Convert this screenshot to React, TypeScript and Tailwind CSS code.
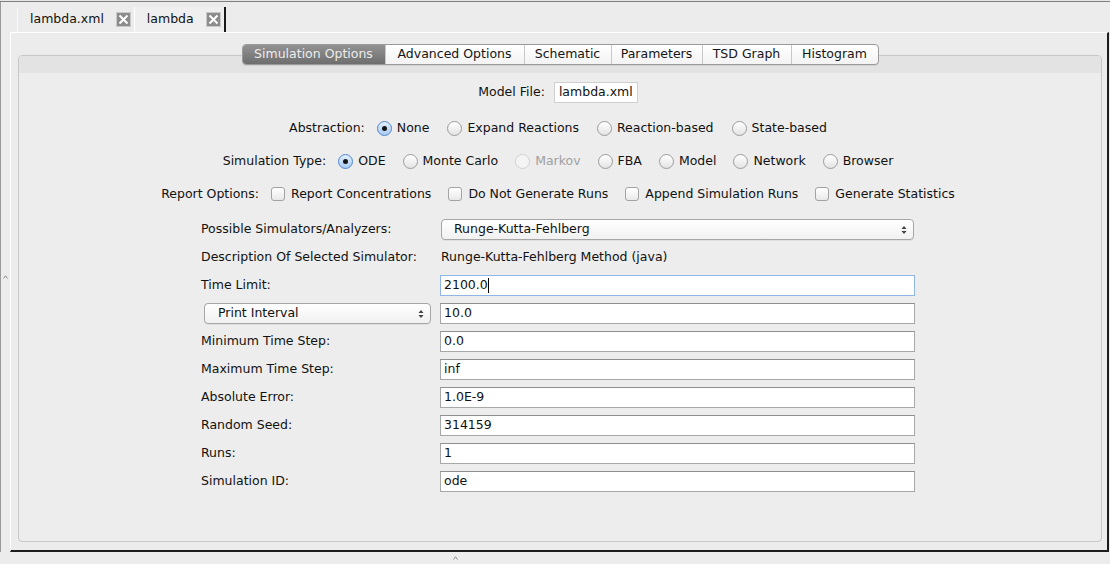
import React from "react";

const CloseBox = () => (
  <svg width="15" height="15" viewBox="0 0 15 15" className="block">
    <rect x="0.5" y="0.5" width="14" height="14" fill="#8c8c8c" stroke="#c9c9c9" />
    <path d="M3.5 3.5 L11.5 11.5 M11.5 3.5 L3.5 11.5" stroke="#ffffff" strokeWidth="2" />
  </svg>
);

const Caret = () => (
  <svg width="5" height="4" viewBox="0 0 5 4" className="block">
    <path d="M0.5 3.5 L2.5 0.8 L4.5 3.5" fill="none" stroke="#8a8a8a" strokeWidth="1" />
  </svg>
);

const UpDown = () => (
  <svg width="6" height="10" viewBox="0 0 6 10" className="block">
    <path d="M3 1 L5.5 4 L0.5 4 Z M3 9 L5.5 6 L0.5 6 Z" fill="#404040" />
  </svg>
);

function Radio({ checked, disabled }: { checked?: boolean; disabled?: boolean }) {
  const cls = checked
    ? "border-[#4f86cc] bg-[linear-gradient(#e3efff,#a9cbf3)]"
    : disabled
    ? "border-[#d2d2d2] bg-[#f4f4f4]"
    : "border-[#9c9c9c] bg-[linear-gradient(#ffffff,#e4e4e4)]";
  return (
    <span className={`w-[15px] h-[15px] rounded-full border flex items-center justify-center shrink-0 ${cls}`}>
      {checked && <span className="w-[5px] h-[5px] rounded-full bg-[#151515]" />}
    </span>
  );
}

function RadioOpt({ label, checked, disabled }: { label: string; checked?: boolean; disabled?: boolean }) {
  return (
    <span className="flex items-center gap-[5px]">
      <Radio checked={checked} disabled={disabled} />
      <span className={disabled ? "text-[#a0a0a0]" : ""}>{label}</span>
    </span>
  );
}

function Check({ label }: { label: string }) {
  return (
    <span className="flex items-center gap-[6px]">
      <span className="w-[14px] h-[14px] rounded-[3px] border border-[#a3a3a3] bg-[linear-gradient(#ffffff,#e9e9e9)] shrink-0" />
      <span>{label}</span>
    </span>
  );
}

function Input({ value, focused, cursor }: { value: string; focused?: boolean; cursor?: boolean }) {
  return (
    <div
      className={`h-[21px] bg-white border pl-[3px] flex items-center ${
        focused ? "border-[#8fb6e4]" : "border-[#a8a8a8] border-t-[#8f8f8f]"
      }`}
    >
      <span>{value}</span>
      {cursor && <span className="w-px h-[15px] bg-black" />}
    </div>
  );
}

function PopUp({ value, textPad }: { value: string; textPad: string }) {
  return (
    <div
      className={`h-[21px] rounded-[4px] border border-[#a6a6a6] bg-[linear-gradient(#ffffff,#f1f1f1)] shadow-[0_1px_0_rgba(0,0,0,0.06)] flex items-center justify-between pr-[6px] ${textPad}`}
    >
      <span>{value}</span>
      <UpDown />
    </div>
  );
}

const Label = ({ children }: { children: React.ReactNode }) => (
  <div className="h-[21px] flex items-center">{children}</div>
);

export default function App() {
  const segs: [string, string][] = [
    ["Simulation Options", "w-[142px]"],
    ["Advanced Options", "w-[139px]"],
    ["Schematic", "w-[87px]"],
    ["Parameters", "w-[91px]"],
    ["TSD Graph", "w-[89px]"],
    ["Histogram", "w-[87px]"],
  ];

  return (
    <div className="w-[1110px] h-[564px] bg-[#ececec] flex flex-col font-['DejaVu_Sans',sans-serif] text-[12.5px] text-[#111] overflow-hidden leading-none">
      <div className="h-px bg-[#e6e6e6]" />
      <div className="flex-1 flex border-t border-[#7f7f7f] min-h-0">
        {/* left divider strip */}
        <div className="w-[10px] border-l border-[#9a9a9a] flex items-center justify-center pr-px">
          <Caret />
        </div>
        {/* tabbed pane */}
        <div className="flex-1 flex flex-col min-w-0">
          <div className="h-[30px] flex items-end pl-[7px]">
            <div className="h-[25px] flex items-center border-l border-[#f8f8f8] pl-[12px] pr-[3px]">
              <span>lambda.xml</span>
              <span className="ml-[12px]">
                <CloseBox />
              </span>
            </div>
            <div className="h-[25px] flex items-center border-l border-white border-r-2 border-r-[#1a1a1a] pl-[12px] pr-[3px] bg-[#efefef]">
              <span>lambda</span>
              <span className="ml-[12px]">
                <CloseBox />
              </span>
            </div>
          </div>
          <div className="flex-1 flex flex-col border-t border-l border-white border-r-2 border-b-2 border-r-[#1c1c1c] border-b-[#1c1c1c] pt-[22px] pl-[7px] pr-[5px] pb-[8px] min-h-0">
            <div className="flex-1 flex flex-col border border-[#c8c8c8] rounded-[4px] bg-[#ededed]">
              <div className="h-[17px] bg-[#e3e3e3] rounded-t-[3px] flex justify-center">
                <div className="-mt-[12px] h-[21px] flex rounded-[4px] border border-[#9a9a9a] overflow-hidden bg-[linear-gradient(#ffffff,#f3f3f3)] shadow-[0_1px_0_rgba(0,0,0,0.08)]">
                  {segs.map(([s, w], i) => (
                    <div
                      key={s}
                      className={`${w} flex items-center justify-center ${
                        i === 0
                          ? "bg-[linear-gradient(#929292,#6e6e6e)] text-[#ececec]"
                          : "border-l border-[#c8c8c8] text-[#151515]"
                      }`}
                    >
                      {s}
                    </div>
                  ))}
                </div>
              </div>

              {/* centered rows */}
              <div className="flex flex-col items-center pr-[4px]">
                <div className="mt-[9px] h-[21px] flex items-center gap-[9px]">
                  <span>Model File:</span>
                  <span className="h-[21px] border border-[#d0d0d0] bg-white flex items-center px-[4px]">lambda.xml</span>
                </div>
                <div className="mt-[15px] h-[20px] flex items-center">
                  <span className="mr-[12px]">Abstraction:</span>
                  <span className="flex items-center gap-[18px]">
                    <RadioOpt label="None" checked />
                    <RadioOpt label="Expand Reactions" />
                    <RadioOpt label="Reaction-based" />
                    <RadioOpt label="State-based" />
                  </span>
                </div>
                <div className="mt-[13px] h-[20px] flex items-center">
                  <span className="mr-[12px]">Simulation Type:</span>
                  <span className="flex items-center gap-[17px]">
                    <RadioOpt label="ODE" checked />
                    <RadioOpt label="Monte Carlo" />
                    <RadioOpt label="Markov" disabled />
                    <RadioOpt label="FBA" />
                    <RadioOpt label="Model" />
                    <RadioOpt label="Network" />
                    <RadioOpt label="Browser" />
                  </span>
                </div>
                <div className="mt-[13px] h-[20px] flex items-center">
                  <span className="mr-[12px]">Report Options:</span>
                  <span className="flex items-center gap-[17px]">
                    <Check label="Report Concentrations" />
                    <Check label="Do Not Generate Runs" />
                    <Check label="Append Simulation Runs" />
                    <Check label="Generate Statistics" />
                  </span>
                </div>
              </div>

              {/* form grid */}
              <div className="mt-[15px] ml-[182px] w-[714px] grid grid-cols-[230px_475px] gap-x-[9px] gap-y-[7px]">
                <Label>Possible Simulators/Analyzers:</Label>
                <div className="pl-px pr-px">
                  <PopUp value="Runge-Kutta-Fehlberg" textPad="pl-[12px]" />
                </div>
                <Label>Description Of Selected Simulator:</Label>
                <div className="h-[21px] flex items-center pl-px">Runge-Kutta-Fehlberg Method (java)</div>
                <Label>Time Limit:</Label>
                <Input value="2100.0" focused cursor />
                <div className="pl-[3px]">
                  <PopUp value="Print Interval" textPad="pl-[13px]" />
                </div>
                <Input value="10.0" />
                <Label>Minimum Time Step:</Label>
                <Input value="0.0" />
                <Label>Maximum Time Step:</Label>
                <Input value="inf" />
                <Label>Absolute Error:</Label>
                <Input value="1.0E-9" />
                <Label>Random Seed:</Label>
                <Input value="314159" />
                <Label>Runs:</Label>
                <Input value="1" />
                <Label>Simulation ID:</Label>
                <Input value="ode" />
              </div>
            </div>
          </div>
        </div>
        <div className="w-px" />
      </div>
      <div className="h-[12px] flex items-center pl-[453px]">
        <Caret />
      </div>
    </div>
  );
}
